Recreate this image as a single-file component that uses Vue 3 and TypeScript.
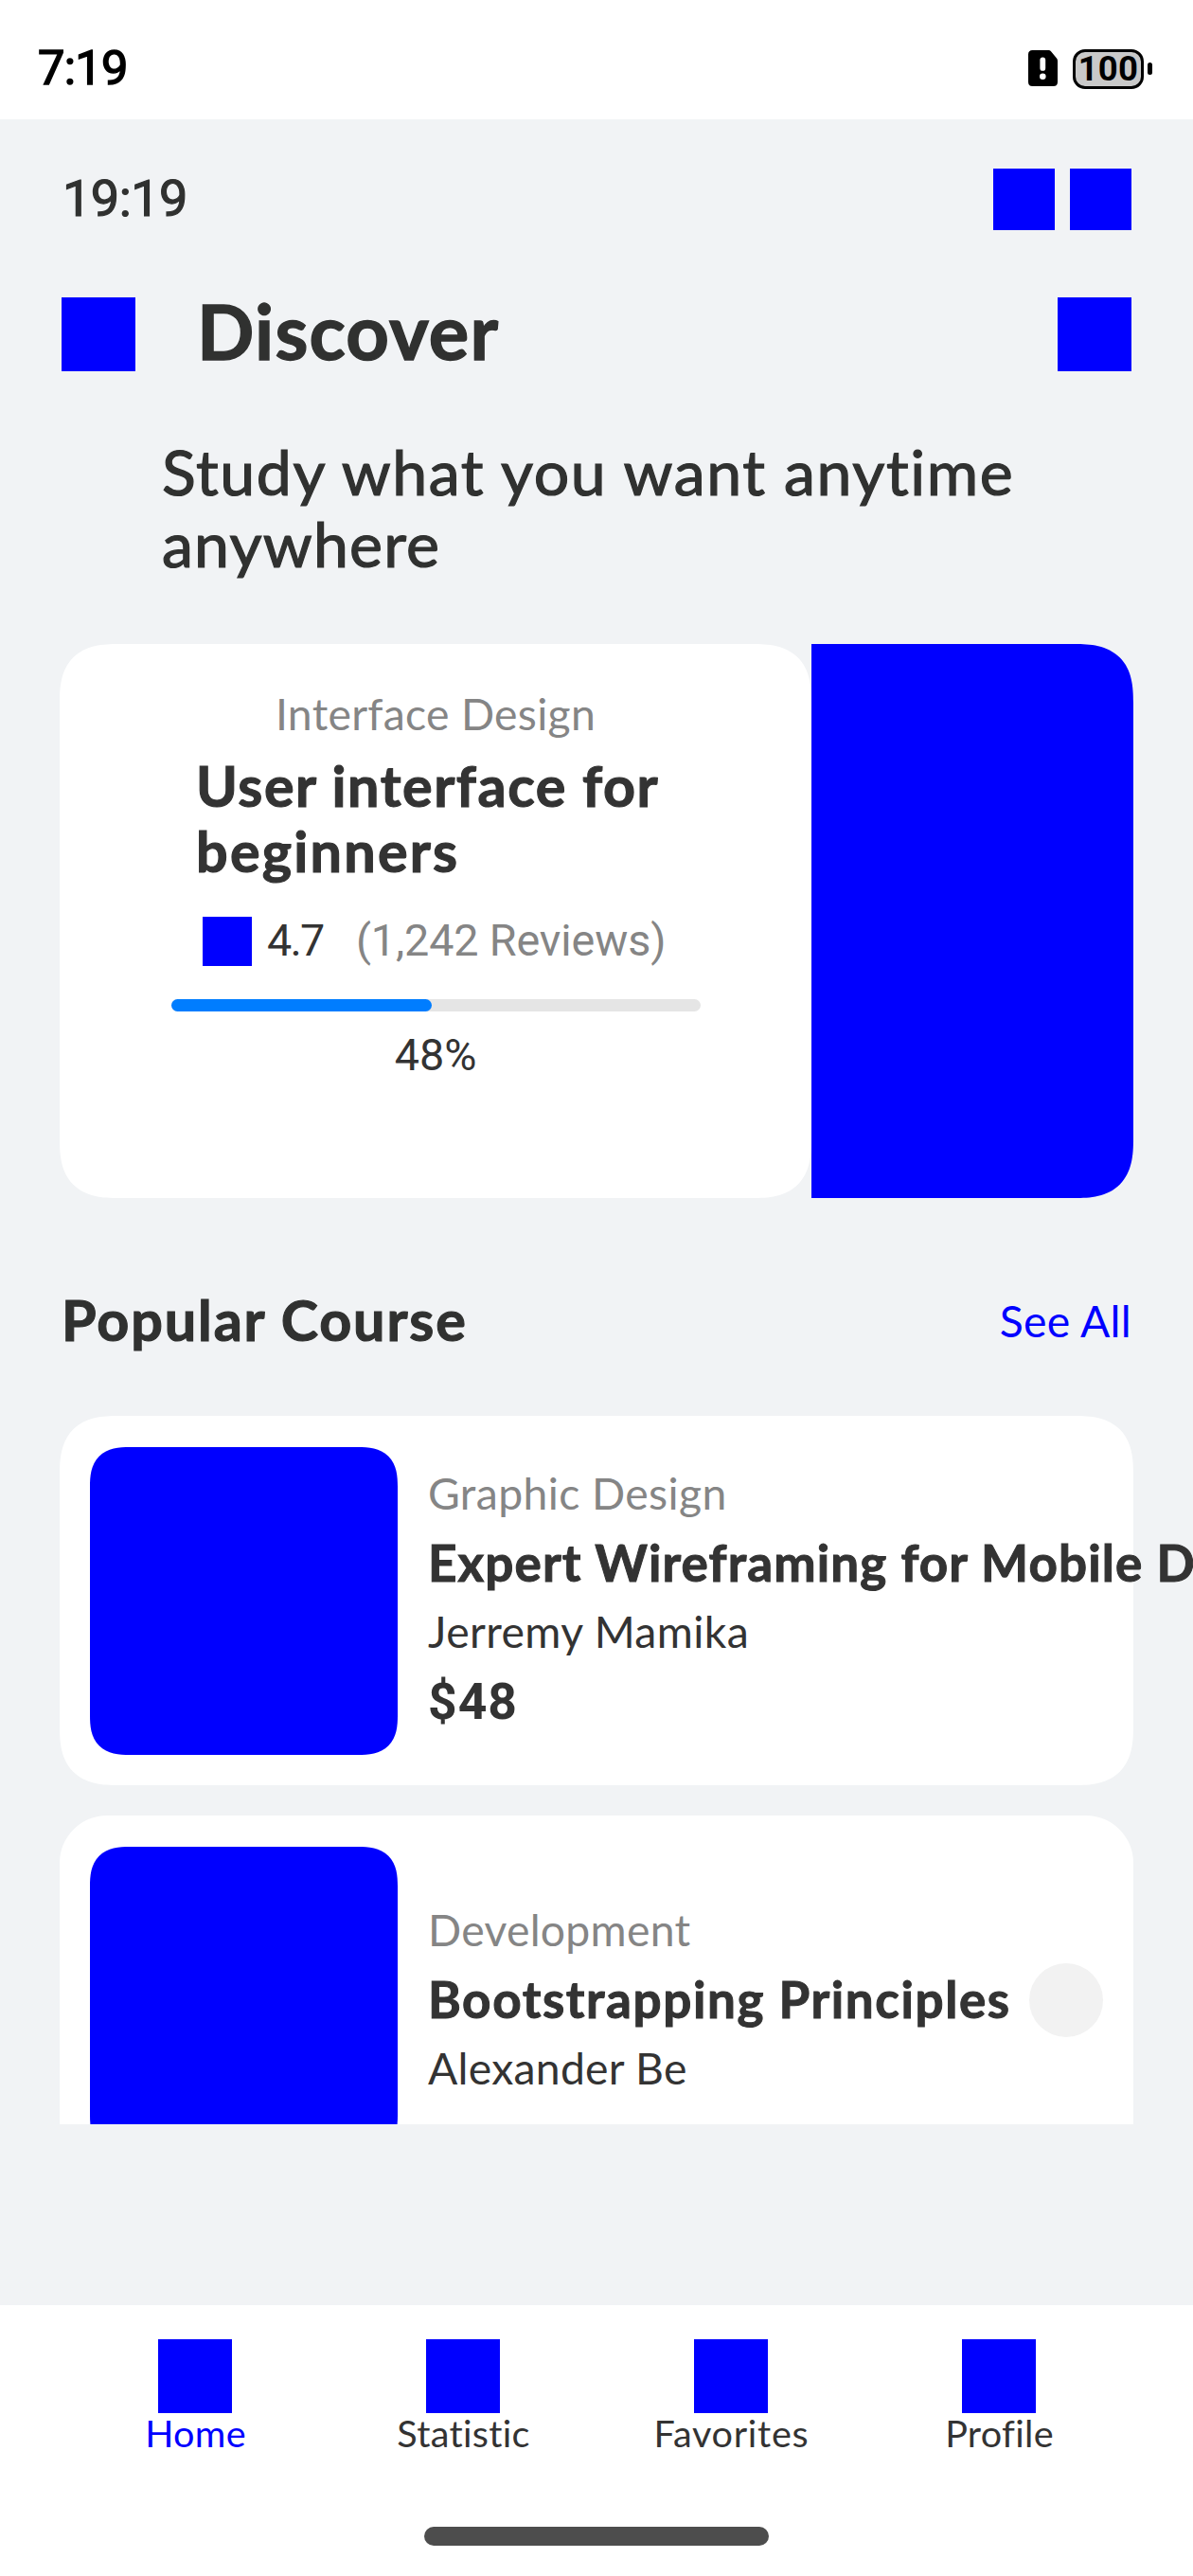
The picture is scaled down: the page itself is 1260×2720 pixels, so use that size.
<script setup lang="ts">
interface Course {
  id: string
  category: string
  title: string
  author: string
  price?: string
  action: boolean
}

const progress = 49.3

const courses: Course[] = [
  {
    id: 'wireframing',
    category: 'Graphic Design',
    title: 'Expert Wireframing for Mobile Design',
    author: 'Jerremy Mamika',
    price: '$48',
    action: false,
  },
  {
    id: 'bootstrapping',
    category: 'Development',
    title: 'Bootstrapping Principles',
    author: 'Alexander Be',
    action: true,
  },
]

const tabs = [
  { id: 'home', label: 'Home', active: true },
  { id: 'statistic', label: 'Statistic', active: false },
  { id: 'favorites', label: 'Favorites', active: false },
  { id: 'profile', label: 'Profile', active: false },
]
</script>

<template>
  <div class="page">
    <header class="status">
      <span class="status-time">7:19</span>
      <div class="status-icons">
        <svg class="sim" width="31" height="38" viewBox="0 0 31 38">
          <path d="M4.500 0H21.500Q23 0 24 1.200L30 8.500Q31 9.700 31 11.500V33.500Q31 38 26.500 38H4.500Q0 38 0 33.500V4.500Q0 0 4.500 0Z" fill="#000" />
          <rect x="12.400" y="7.500" width="5.800" height="14.300" rx="2.900" fill="#fff" />
          <circle cx="15.300" cy="27.700" r="3.300" fill="#fff" />
        </svg>
        <div class="battery"><span>100</span></div>
        <div class="nub"></div>
      </div>
    </header>

    <main class="content">
      <div class="clock-row">
        <span class="clock">19:19</span>
        <div class="clock-icons">
          <i class="block sm"></i>
          <i class="block sm"></i>
        </div>
      </div>

      <div class="title-row">
        <i class="block md"></i>
        <h1>Discover</h1>
        <i class="block md end"></i>
      </div>

      <p class="tagline">Study what you want anytime <span>anywhere</span></p>

      <section class="hero">
        <div class="hero-body">
          <div class="hero-category">Interface Design</div>
          <h2>User interface for <span>beginners</span></h2>
          <div class="rating">
            <i class="block star"></i>
            <span class="score">4.7</span>
            <span class="reviews">(1,242 Reviews)</span>
          </div>
          <div class="track"><div class="fill" :style="{ width: progress + '%' }"></div></div>
          <div class="percent">48%</div>
        </div>
        <div class="hero-image"></div>
      </section>

      <div class="section-head">
        <h3>Popular Course</h3>
        <a class="see-all">See All</a>
      </div>

      <div class="list">
        <article v-for="c in courses" :key="c.id" class="card" :class="c.id">
          <div class="thumb"></div>
          <div class="info">
            <div class="category">{{ c.category }}</div>
            <div class="course-title">{{ c.title }}</div>
            <div class="author">{{ c.author }}</div>
            <div v-if="c.price" class="price">{{ c.price }}</div>
          </div>
          <div v-if="c.action" class="action"></div>
        </article>
      </div>
    </main>

    <footer class="nav">
      <nav class="tabs">
        <div v-for="t in tabs" :key="t.id" class="tab" :class="[t.id, { active: t.active }]">
          <i class="block md"></i>
          <span>{{ t.label }}</span>
        </div>
      </nav>
      <div class="indicator"></div>
    </footer>
  </div>
</template>

<style>
body {
  background: #fff;
}
</style>

<style scoped>
.page {
  width: 1260px;
  height: 2720px;
  display: flex;
  flex-direction: column;
  overflow: hidden;
  background: #f1f3f5;
  color: #333;
  font-family: Lato, "Noto Sans", sans-serif;
}
h1, h2, h3, p {
  margin: 0;
}
.block {
  display: block;
  flex: none;
  background: #00f;
}
.block.sm { width: 65px; height: 65px; }
.block.md { width: 78px; height: 78px; }
.block.star { width: 52px; height: 52px; }

/* system status bar */
.status {
  height: 126px;
  flex: none;
  display: flex;
  justify-content: space-between;
  background: #fff;
  padding: 0 43px 0 40px;
  color: #000;
}
.status-time {
  padding-top: 18px;
  height: 108px;
  line-height: 108px;
  font-family: Roboto, sans-serif;
  font-size: 50.600px;
  letter-spacing: -0.700px;
  -webkit-text-stroke: 1.500px #000;
}
.status-icons {
  display: flex;
  align-items: flex-start;
  padding-top: 52px;
}
.sim { margin: 1px 16px 0 0; }
.battery {
  box-sizing: border-box;
  width: 75px;
  height: 42px;
  border: 3px solid #000;
  border-radius: 13px;
  background: #c9c9c9;
  display: flex;
  justify-content: center;
}
.battery span {
  font: 700 36.500px/35px Roboto, sans-serif;
  letter-spacing: 0.3px;
}
.nub {
  width: 5px;
  height: 13px;
  border-radius: 3px;
  margin: 14px 0 0 4px;
  background: #000;
}

/* page header */
.content {
  display: flex;
  flex-direction: column;
}
.clock-row {
  display: flex;
  justify-content: space-between;
  margin: 52px 65px 0;
  height: 65px;
}
.clock {
  padding-left: 1px;
  font: 400 54px/64px Roboto, sans-serif;
  letter-spacing: -0.500px;
  -webkit-text-stroke: 1.200px #303130;
  color: #303130;
}
.clock-icons { display: flex; gap: 16px; }
.title-row {
  display: flex;
  align-items: flex-start;
  margin: 71px 65px 0;
}
h1 {
  margin-left: 65px;
  font-size: 79.500px;
  line-height: 71px;
  font-weight: 700;
  letter-spacing: 1.200px;
  color: #303130;
  -webkit-text-stroke: 1.300px #303130;
}
.end { margin-left: auto; }
.tagline {
  width: 917px;
  margin: 68px 0 0 171px;
  font-size: 66.200px;
  line-height: 76px;
  letter-spacing: 1.580px;
  color: #303130;
  -webkit-text-stroke: 1.200px #303130;
}
.tagline span { letter-spacing: 1.200px; }

/* featured course */
.hero {
  display: flex;
  margin: 68px 63px 0;
  height: 585px;
}
.hero-body {
  width: 794px;
  display: flex;
  flex-direction: column;
  align-items: center;
  background: #fff;
  border-radius: 50px;
}
.hero-image {
  width: 340px;
  background: #00f;
  border-radius: 0 50px 50px 0;
}
.hero-category {
  margin-top: 46px;
  font-size: 46.300px;
  line-height: 54px;
  letter-spacing: 0.300px;
  color: #858585;
}
h2 {
  width: 506px;
  margin-top: 15px;
  font-size: 59.300px;
  line-height: 69px;
  font-weight: 700;
  letter-spacing: 1.540px;
  -webkit-text-stroke: 1.100px #333;
}
h2 span { letter-spacing: 2.230px; }
.rating {
  display: flex;
  width: 492px;
  height: 52px;
  margin-top: 35px;
  font: 400 46.700px/51px Roboto, sans-serif;
}
.score {
  width: 94px;
  margin-left: 16px;
  letter-spacing: -1.800px;
  white-space: nowrap;
}
.reviews {
  letter-spacing: -0.120px;
  color: #858585;
  white-space: nowrap;
}
.track {
  width: 559px;
  height: 13px;
  margin-top: 35px;
  border-radius: 7px;
  background: #e5e5e5;
}
.fill {
  height: 13px;
  border-radius: 7px;
  background: #007dff;
}
.percent {
  margin-top: 19px;
  font: 400 46.700px/54px Roboto, sans-serif;
}

/* course list */
.section-head {
  display: flex;
  justify-content: space-between;
  margin: 93px 65px 0;
  height: 70px;
}
h3 {
  font-size: 59.300px;
  line-height: 71px;
  font-weight: 700;
  letter-spacing: 1.880px;
  color: #303130;
  -webkit-text-stroke: 1.100px #303130;
}
.see-all {
  margin-top: 9px;
  font-size: 46.300px;
  line-height: 54px;
  letter-spacing: 0.300px;
  color: #00f;
}
.list {
  height: 748px;
  margin-top: 67px;
  padding: 0 63px;
  display: flex;
  flex-direction: column;
  gap: 32px;
  overflow: hidden;
}
.card {
  box-sizing: border-box;
  flex: none;
  height: 390px;
  display: flex;
  padding: 0 32px;
  background: #fff;
  border-radius: 50px;
}
.thumb {
  flex: none;
  width: 325px;
  height: 325px;
  margin: 33px 32px 0 0;
  border-radius: 33px;
  background: #00f;
}
.info {
  flex: 1;
  min-width: 0;
  padding-top: 54px;
  white-space: nowrap;
}
.bootstrapping .info { padding-top: 93px; }
.category, .author {
  font-size: 46.300px;
  line-height: 54px;
  letter-spacing: 0.400px;
}
.category { color: #858585; }
.bootstrapping .category, .bootstrapping .author { letter-spacing: 0.280px; }
.course-title {
  margin-top: 17px;
  font-size: 53px;
  line-height: 60px;
  font-weight: 700;
  letter-spacing: 1.110px;
  -webkit-text-stroke: 1px #333;
}
.bootstrapping .course-title { letter-spacing: 1.580px; }
.author { margin-top: 15px; }
.price {
  margin-top: 18px;
  font: 700 53.400px/60px Roboto, sans-serif;
  letter-spacing: 1px;
}
.action {
  flex: none;
  width: 78px;
  height: 78px;
  margin-top: 156px;
  border-radius: 50%;
  background: #f2f2f2;
}

/* continuous corners */
@supports (corner-shape: superellipse(1.4)) {
  .hero-body, .wireframing {
    border-radius: 62px;
    corner-shape: superellipse(1.4);
  }
  .hero-image {
    border-radius: 0 62px 62px 0;
    corner-shape: superellipse(1.4);
  }
  .thumb {
    border-radius: 42px;
    corner-shape: superellipse(1.4);
  }
}

/* bottom navigation */
.nav {
  height: 286px;
  flex: none;
  margin-top: auto;
  background: #fff;
}
.tabs {
  display: grid;
  grid-template-columns: repeat(4, 1fr);
  margin: 0 64px;
  padding-top: 36px;
}
.tab {
  display: flex;
  flex-direction: column;
  align-items: center;
  font-size: 39.600px;
  line-height: 42px;
  letter-spacing: 0.300px;
}
.tab span { padding-left: 2px; }
.favorites { letter-spacing: 0.740px; }
.active { color: #00f; }
.indicator {
  width: 364px;
  height: 20px;
  margin: 78px auto 0;
  border-radius: 10px;
  background: #4d4d4d;
}
</style>
